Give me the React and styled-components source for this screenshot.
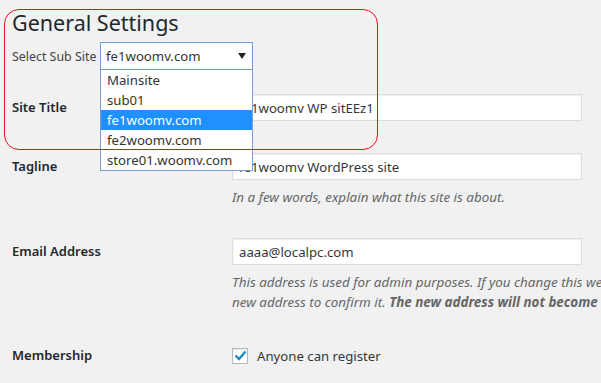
import React from "react";
import styled, { createGlobalStyle } from "styled-components";

const Global = createGlobalStyle`
  html, body { margin: 0; padding: 0; background: #f1f1f1; }
  body { width: 601px; height: 383px; overflow: hidden; font-family: "Noto Sans", "Open Sans", sans-serif; color: #23282d; }
`;

const Page = styled.div`
  position: relative;
  padding: 0 0 0 12px;
  width: 589px;
  height: 383px;
  overflow: hidden;
`;

const Title = styled.h1`
  margin: 0;
  padding-top: 8px;
  font-size: 21.5px;
  font-weight: 400;
  line-height: 30px;
  color: #23282d;
`;

const SubSiteRow = styled.div`
  display: flex;
  align-items: center;
  margin-top: 4px;
  height: 28px;
  position: relative;
  z-index: 3;
`;

const SubSiteLabel = styled.span`
  width: 88px;
  font-size: 12.4px;
  color: #444;
`;

const SelectWrap = styled.div`
  position: relative;
  width: 153px;
`;

const SelectBox = styled.div`
  box-sizing: border-box;
  height: 28px;
  width: 153px;
  border: 1px solid #6d9fdc;
  background: #fff;
  display: flex;
  align-items: center;
  justify-content: space-between;
  padding: 0 6px 0 5px;
  font-size: 13.2px;
  color: #32373c;
`;

const Arrow = styled.svg`
  width: 8px;
  height: 6px;
  display: block;
`;

const List = styled.ul`
  position: absolute;
  left: 0;
  top: 28px;
  margin: 0;
  padding: 0;
  list-style: none;
  box-sizing: border-box;
  width: 153px;
  background: #fff;
  border: 1px solid #7a9fd6;
  border-top: none;
`;

const Item = styled.li`
  height: 20px;
  line-height: 20px;
  padding-left: 6px;
  font-size: 13.2px;
  color: ${(p) => (p.$active ? "#fff" : "#333")};
  background: ${(p) => (p.$active ? "#1e90ff" : "transparent")};
  white-space: nowrap;
`;

const Table = styled.div`
  display: flex;
  flex-direction: column;
`;

const Row = styled.div`
  display: flex;
  align-items: flex-start;
  padding-top: ${(p) => p.$top}px;
`;

const Label = styled.div`
  width: 220px;
  flex: none;
  font-size: 13px;
  font-weight: 600;
  line-height: 27px;
  color: #23282d;
`;

const Field = styled.div`
  display: flex;
  flex-direction: column;
`;

const Input = styled.div`
  box-sizing: border-box;
  width: 350px;
  height: 27px;
  border: 1px solid #ddd;
  box-shadow: inset 0 1px 2px rgba(0, 0, 0, 0.07);
  background: #fff;
  padding: 0 6px;
  display: flex;
  align-items: center;
  font-size: 13.2px;
  color: #32373c;
  white-space: nowrap;
`;

const Description = styled.p`
  margin: 7px 0 0;
  font-size: 13.4px;
  font-style: italic;
  line-height: 20px;
  color: #666;
  white-space: nowrap;
  strong { font-weight: 700; }
`;

const CheckLine = styled.label`
  display: flex;
  align-items: center;
  height: 27px;
  font-size: 13.2px;
  color: #32373c;
  gap: 9px;
`;

const Checkbox = styled.span`
  box-sizing: border-box;
  width: 16px;
  height: 16px;
  border: 1px solid #b4b9be;
  background: #fff;
  box-shadow: inset 0 1px 2px rgba(0, 0, 0, 0.1);
  display: flex;
  align-items: center;
  justify-content: center;
`;

const Annotation = styled.div`
  position: absolute;
  left: 4px;
  top: 9px;
  width: 374px;
  height: 141px;
  box-sizing: border-box;
  border: 1px solid #e8101f;
  border-radius: 15px;
  pointer-events: none;
  z-index: 5;
`;

const sites = ["Mainsite", "sub01", "fe1woomv.com", "fe2woomv.com", "store01.woomv.com"];

export default function App() {
  return (
    <>
      <Global />
      <Page>
        <Title>General Settings</Title>
        <SubSiteRow>
          <SubSiteLabel>Select Sub Site</SubSiteLabel>
          <SelectWrap>
            <SelectBox>
              <span>fe1woomv.com</span>
              <Arrow viewBox="0 0 8 6">
                <path d="M0 0 H8 L4 6 Z" fill="#222" />
              </Arrow>
            </SelectBox>
            <List>
              {sites.map((s) => (
                <Item key={s} $active={s === "fe1woomv.com"}>
                  {s}
                </Item>
              ))}
            </List>
          </SelectWrap>
        </SubSiteRow>
        <Table>
          <Row $top={24}>
            <Label>Site Title</Label>
            <Field>
              <Input>fe1woomv WP sitEEz1</Input>
            </Field>
          </Row>
          <Row $top={32}>
            <Label>Tagline</Label>
            <Field>
              <Input>fe1woomv WordPress site</Input>
              <Description>In a few words, explain what this site is about.</Description>
            </Field>
          </Row>
          <Row $top={31}>
            <Label>Email Address</Label>
            <Field>
              <Input>aaaa@localpc.com</Input>
              <Description>
                This address is used for admin purposes. If you change this we will send you an email at your
                <br />
                new address to confirm it. <strong>The new address will not become active until confirmed.</strong>
              </Description>
            </Field>
          </Row>
          <Row $top={30}>
            <Label>Membership</Label>
            <Field>
              <CheckLine>
                <Checkbox>
                  <svg width="13" height="11" viewBox="0 0 13 11">
                    <path d="M1.5 5.5 L5 9 L11.5 1.5" fill="none" stroke="#1e8cbe" strokeWidth="2.4" />
                  </svg>
                </Checkbox>
                Anyone can register
              </CheckLine>
            </Field>
          </Row>
        </Table>
        <Annotation />
      </Page>
    </>
  );
}
